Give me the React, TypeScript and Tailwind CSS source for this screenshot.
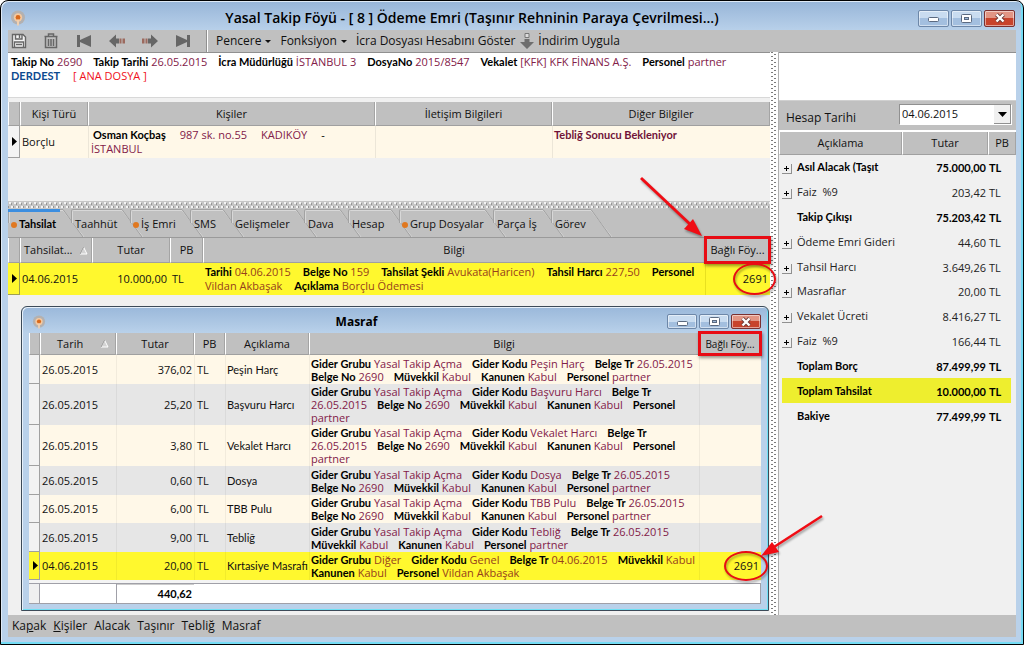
import React from 'react';
import clsx from 'clsx';

type Field = [label: string, value: string];

const BOLD = "font-['Lato','Open_Sans',sans-serif] font-bold text-black";

const menus = ['Pencere', 'Fonksiyon'];

const tabs: { name: string; width: number; dot?: boolean; active?: boolean; box: string }[] = [
  { name: 'Tahsilat', width: 63, dot: true, active: true, box: 'w-[63px]' },
  { name: 'Taahhüt', width: 59, box: 'w-[59px]' },
  { name: 'İş Emri', width: 60, dot: true, box: 'w-[60px]' },
  { name: 'SMS', width: 41, box: 'w-[41px]' },
  { name: 'Gelişmeler', width: 73, box: 'w-[73px]' },
  { name: 'Dava', width: 44, box: 'w-[44px]' },
  { name: 'Hesap', width: 51, box: 'w-[51px]' },
  { name: 'Grup Dosyalar', width: 94, dot: true, box: 'w-[94px]' },
  { name: 'Parça İş', width: 58, box: 'w-[58px]' },
  { name: 'Görev', width: 48, box: 'w-[48px]' },
];

const expenses: {
  date: string;
  amount: string;
  name: string;
  lines: Field[][];
  height: string;
  linked?: string;
}[] = [
  {
    date: '26.05.2015', amount: '376,02', name: 'Peşin Harç', height: 'h-[29px]',
    lines: [
      [['Gider Grubu', 'Yasal Takip Açma'], ['Gider Kodu', 'Peşin Harç'], ['Belge Tr', '26.05.2015']],
      [['Belge No', '2690'], ['Müvekkil', 'Kabul'], ['Kanunen', 'Kabul'], ['Personel', 'partner']],
    ],
  },
  {
    date: '26.05.2015', amount: '25,20', name: 'Başvuru Harcı', height: 'h-[41px]',
    lines: [
      [['Gider Grubu', 'Yasal Takip Açma'], ['Gider Kodu', 'Başvuru Harcı'], ['Belge Tr', '']],
      [['', '26.05.2015'], ['Belge No', '2690'], ['Müvekkil', 'Kabul'], ['Kanunen', 'Kabul'], ['Personel', '']],
      [['', 'partner']],
    ],
  },
  {
    date: '26.05.2015', amount: '3,80', name: 'Vekalet Harcı', height: 'h-[41px]',
    lines: [
      [['Gider Grubu', 'Yasal Takip Açma'], ['Gider Kodu', 'Vekalet Harcı'], ['Belge Tr', '']],
      [['', '26.05.2015'], ['Belge No', '2690'], ['Müvekkil', 'Kabul'], ['Kanunen', 'Kabul'], ['Personel', '']],
      [['', 'partner']],
    ],
  },
  {
    date: '26.05.2015', amount: '0,60', name: 'Dosya', height: 'h-[29px]',
    lines: [
      [['Gider Grubu', 'Yasal Takip Açma'], ['Gider Kodu', 'Dosya'], ['Belge Tr', '26.05.2015']],
      [['Belge No', '2690'], ['Müvekkil', 'Kabul'], ['Kanunen', 'Kabul'], ['Personel', 'partner']],
    ],
  },
  {
    date: '26.05.2015', amount: '6,00', name: 'TBB Pulu', height: 'h-[28px]',
    lines: [
      [['Gider Grubu', 'Yasal Takip Açma'], ['Gider Kodu', 'TBB Pulu'], ['Belge Tr', '26.05.2015']],
      [['Belge No', '2690'], ['Müvekkil', 'Kabul'], ['Kanunen', 'Kabul'], ['Personel', 'partner']],
    ],
  },
  {
    date: '26.05.2015', amount: '9,00', name: 'Tebliğ', height: 'h-[29px]',
    lines: [
      [['Gider Grubu', 'Yasal Takip Açma'], ['Gider Kodu', 'Tebliğ'], ['Belge Tr', '26.05.2015']],
      [['Müvekkil', 'Kabul'], ['Kanunen', 'Kabul'], ['Personel', 'partner']],
    ],
  },
  {
    date: '04.06.2015', amount: '20,00', name: 'Kırtasiye Masrafı', height: 'h-[28px]', linked: '2691',
    lines: [
      [['Gider Grubu', 'Diğer'], ['Gider Kodu', 'Genel'], ['Belge Tr', '04.06.2015'], ['Müvekkil', 'Kabul']],
      [['Kanunen', 'Kabul'], ['Personel', 'Vildan Akbaşak']],
    ],
  },
];

const balance: { name: string; amount: string; kind: 'item' | 'sum' | 'marked'; bold?: boolean }[] = [
  { name: 'Asıl Alacak (Taşıt', amount: '75.000,00', kind: 'item', bold: true },
  { name: 'Faiz  %9', amount: '203,42', kind: 'item' },
  { name: 'Takip Çıkışı', amount: '75.203,42', kind: 'sum', bold: true },
  { name: 'Ödeme Emri Gideri', amount: '44,60', kind: 'item' },
  { name: 'Tahsil Harcı', amount: '3.649,26', kind: 'item' },
  { name: 'Masraflar', amount: '20,00', kind: 'item' },
  { name: 'Vekalet Ücreti', amount: '8.416,27', kind: 'item' },
  { name: 'Faiz  %9', amount: '166,44', kind: 'item' },
  { name: 'Toplam Borç', amount: '87.499,99', kind: 'sum', bold: true },
  { name: 'Toplam Tahsilat', amount: '10.000,00', kind: 'marked', bold: true },
  { name: 'Bakiye', amount: '77.499,99', kind: 'sum', bold: true },
];

function Fields({ items, tone = 'text-[#822048]', gap = 'gap-3' }: { items: Field[]; tone?: string; gap?: string }) {
  return (
    <div className={clsx('flex whitespace-nowrap', gap)}>
      {items.map(([label, value], i) => (
        <span key={i}>
          {label && <b className={BOLD}>{label}</b>}
          {label && value && ' '}
          {value && <span className={tone}>{value}</span>}
        </span>
      ))}
    </div>
  );
}

function Th({ children, className }: { children?: React.ReactNode; className?: string }) {
  return (
    <th
      className={clsx(
        'relative border-r border-b border-l border-r-[#a4a4a4] border-b-[#a0a0a0] border-l-white bg-[#c0c0c0] text-center font-normal whitespace-nowrap text-[#111]',
        className,
      )}
    >
      {children}
    </th>
  );
}

function Marker() {
  return (
    <svg width="5" height="9" viewBox="0 0 5 9" className="ml-1 block" aria-hidden="true">
      <path d="M0 0L5 4.5L0 9Z" fill="#000" />
    </svg>
  );
}

function SortMark() {
  return (
    <svg width="9" height="9" viewBox="0 0 9 9" aria-hidden="true">
      <path d="M4.5 1L8 8H1Z" fill="#d4d4d4" stroke="#fff" />
      <path d="M4.5 1L1 8" stroke="#909090" />
    </svg>
  );
}

function AppMark({ size }: { size: number }) {
  return (
    <svg width={size} height={size} viewBox="0 0 16 16" aria-hidden="true">
      <circle cx="8" cy="7.5" r="7" fill="#b3b1b1" />
      <circle cx="8" cy="7.5" r="4.2" fill="#f4c9a0" />
      <circle cx="8" cy="7.5" r="2.4" fill="#d9691c" />
      <path d="M7 9.5h2v6H7z" fill="#f0d0b0" />
    </svg>
  );
}

function WindowButtons({ small }: { small?: boolean }) {
  const base = clsx(
    'flex items-center justify-center rounded-[2px] border shadow-[inset_0_0_0_1px_rgba(255,255,255,0.5)]',
    small ? 'h-[15px] w-[30px]' : 'h-[17px] w-[31px]',
  );
  const blue = 'border-[#6d87a8] bg-linear-to-b from-[#c9dcf0] from-50% to-[#a3bfdf] to-50%';
  return (
    <div className="flex gap-[2px]">
      <button type="button" aria-label="Simge durumuna küçült" className={clsx(base, blue)}>
        <svg width="11" height="10" viewBox="0 0 11 10">
          <rect x="0.5" y="4.5" width="10" height="4" rx="1" fill="#fff" stroke="#5b6a80" />
        </svg>
      </button>
      <button type="button" aria-label="Ekranı kapla" className={clsx(base, blue)}>
        <svg width="11" height="9" viewBox="0 0 11 9">
          <rect x="0.5" y="0.5" width="10" height="8" rx="1" fill="#fff" stroke="#5b6a80" />
          <rect x="3.5" y="3.5" width="4" height="2" fill="#9db8da" stroke="#5b6a80" />
        </svg>
      </button>
      <button
        type="button"
        aria-label="Kapat"
        className={clsx(base, 'border-[#7a3030] bg-linear-to-b from-[#e29584] from-45% to-[#c8432c] to-50%')}
      >
        <svg width="12" height="10" viewBox="0 0 12 10">
          <path d="M2.5 1.5L9.5 8.5M9.5 1.5L2.5 8.5" stroke="#6b3a38" strokeWidth="4" />
          <path d="M2.5 1.5L9.5 8.5M9.5 1.5L2.5 8.5" stroke="#fff" strokeWidth="2.4" />
        </svg>
      </button>
    </div>
  );
}

function ToolButton({ label, children }: { label: string; children: React.ReactNode }) {
  return (
    <button type="button" aria-label={label} className="flex w-[33px] justify-center">
      <svg width="16" height="16" viewBox="0 0 16 16" fill="#666" aria-hidden="true">
        {children}
      </svg>
    </button>
  );
}

function DotsVertical() {
  return (
    <div className="w-2 shrink-0 bg-white">
      <svg width="100%" height="100%" aria-hidden="true">
        <pattern id="dotsV" width="8" height="4" patternUnits="userSpaceOnUse">
          <rect x="1" y="0" width="2" height="1" fill="#7c7c7c" />
          <rect x="4" y="2" width="2" height="1" fill="#7c7c7c" />
        </pattern>
        <rect width="100%" height="100%" fill="url(#dotsV)" />
      </svg>
    </div>
  );
}

function DotsHorizontal() {
  return (
    <div className="h-2 bg-[#c6c6c6]">
      <svg width="100%" height="8" className="block" aria-hidden="true">
        <pattern id="dotsH" width="5" height="8" patternUnits="userSpaceOnUse">
          <rect x="1" y="1" width="2" height="2" fill="#f4f4f4" />
          <rect x="3" y="2" width="1" height="2" fill="#969696" />
          <rect x="3" y="5" width="2" height="2" fill="#f4f4f4" />
          <rect x="0" y="5" width="1" height="2" fill="#969696" />
        </pattern>
        <rect width="100%" height="100%" fill="url(#dotsH)" />
      </svg>
    </div>
  );
}

function RedBox() {
  return (
    <span className="pointer-events-none absolute -inset-[2px] z-20 border-3 border-[#e80c14] shadow-[1px_2px_3px_rgba(0,0,0,0.4)]" />
  );
}

function RedCircle({ className }: { className: string }) {
  return (
    <span
      className={clsx(
        'pointer-events-none absolute z-20 rounded-[50%] border-2 border-[#e80c14] drop-shadow-[1px_2px_1px_rgba(0,0,0,0.35)]',
        className,
      )}
    />
  );
}

function PersonTable() {
  return (
    <table className="w-full table-fixed border-separate border-spacing-0">
      <colgroup>
        <col className="w-3" />
        <col className="w-[68px]" />
        <col />
        <col className="w-[177px]" />
        <col className="w-[218px]" />
      </colgroup>
      <thead>
        <tr className="h-6">
          <Th />
          <Th>Kişi Türü</Th>
          <Th>Kişiler</Th>
          <Th>İletişim Bilgileri</Th>
          <Th>Diğer Bilgiler</Th>
        </tr>
      </thead>
      <tbody>
        <tr className="h-8 bg-[#fff8e8]">
          <td className="border-r border-b border-[#a0a0a0] bg-[#f4f4f4]"><Marker /></td>
          <td className="pl-[2px]">Borçlu</td>
          <td className="border-l border-[#ece6d8] pt-[2px] pl-[2px] align-top text-[#822048]">
            <div className="flex gap-[14px] pl-[2px] leading-[14px] whitespace-pre">
              <b className={BOLD}>Osman Koçbaş</b>
              <span>987 sk. no.55</span>
              <span>KADIKÖY</span>
              <span className="text-black">-</span>
            </div>
            <div className="leading-[14px]">İSTANBUL</div>
          </td>
          <td className="border-l border-[#ece6d8]" />
          <td className="border-l border-[#ece6d8] pt-[2px] pl-[1px] align-top">
            <b className="font-['Lato','Open_Sans',sans-serif] font-bold text-[#701238]">Tebliğ Sonucu Bekleniyor</b>
          </td>
        </tr>
      </tbody>
    </table>
  );
}

function Tabs() {
  return (
    <div role="tablist" className="flex h-[29px] border-b border-[#9a9a9a] bg-[#c0c0c0]">
      {tabs.map((t) => (
        <button
          key={t.name}
          type="button"
          role="tab"
          aria-selected={!!t.active}
          className={clsx('relative flex items-center gap-[2px] whitespace-nowrap', t.box, t.dot ? 'pl-[3px]' : 'pl-1')}
        >
          <svg className="absolute top-0 left-0 overflow-visible" width={t.width} height="28" fill="none" aria-hidden="true">
            <path
              d={`M1.5 14V2.5Q1.5 1.5 2.5 1.5H${t.width - 8}L${t.width + 13} 28`}
              stroke="#d8d8d8"
            />
            <path d={`M0.5 14V1.5Q0.5 0.5 1.5 0.5H${t.width - 8}L${t.width + 12} 28`} stroke="#a2a2a2" />
            {t.active && <rect x="0" y="0" width={t.width - 11} height="3" fill="#3c8ee0" />}
          </svg>
          {t.dot && <span className="relative mt-[3px] size-[6px] rounded-full bg-[#e07820]" />}
          <span className={clsx('relative mt-[2px]', t.active && BOLD)}>{t.name}</span>
        </button>
      ))}
    </div>
  );
}

function PaymentTable() {
  return (
    <table className="w-full table-fixed border-separate border-spacing-0">
      <colgroup>
        <col className="w-3" />
        <col className="w-[72px]" />
        <col className="w-[78px]" />
        <col className="w-[33px]" />
        <col />
        <col className="w-[65px]" />
      </colgroup>
      <thead>
        <tr className="h-[25px]">
          <Th />
          <Th>
            <span className="flex items-center justify-between px-[3px]">Tahsilat...<SortMark /></span>
          </Th>
          <Th>Tutar</Th>
          <Th>PB</Th>
          <Th>Bilgi</Th>
          <Th>
            Bağlı Föy...
            <RedBox />
            <svg className="pointer-events-none absolute -top-[61px] -left-[67px] z-20 overflow-visible drop-shadow-[1px_2px_1px_rgba(0,0,0,0.35)]" width="64" height="60" aria-hidden="true">
              <path d="M2 1L53 49" stroke="#f00c14" strokeWidth="3" />
              <path d="M63 59L45 52L54 42Z" fill="#f00c14" />
            </svg>
          </Th>
        </tr>
      </thead>
      <tbody>
        <tr className="h-8 bg-[#fff82e]">
          <td className="border-r border-b border-[#a0a050]"><Marker /></td>
          <td className="pl-[2px]">04.06.2015</td>
          <td className="pr-[3px] text-right">10.000,00</td>
          <td className="pl-[2px]">TL</td>
          <td className="pl-[2px] leading-[14px]">
            <Fields
              tone="text-[#96401c]"
              items={[['Tarihi', '04.06.2015'], ['Belge No', '159'], ['Tahsilat Şekli', 'Avukata(Haricen)'], ['Tahsil Harcı', '227,50'], ['Personel', '']]}
            />
            <Fields tone="text-[#96401c]" items={[['', 'Vildan Akbaşak'], ['Açıklama', 'Borçlu Ödemesi']]} />
          </td>
          <td className="relative border-l border-[#e8e020] pr-[2px] text-right">
            2691
            <RedCircle className="top-0 -right-[6px] h-[32px] w-[43px]" />
          </td>
        </tr>
      </tbody>
    </table>
  );
}

function ExpenseWindow() {
  return (
    <section className="relative z-10 mt-[11px] mr-[1px] mb-[3px] ml-[13px] rounded-t-[6px] border border-[#3c4a58] bg-linear-to-b from-[#9ab8da] to-[#b9d1ea] to-[26px] px-[7px] pb-[6px] shadow-[inset_1px_1px_0_#e6f0fa,inset_-1px_-1px_0_#6fe0f4]">
      <header className="flex h-[26px] items-center pt-[3px] pl-[3px]">
        <AppMark size={14} />
        <h2 className="flex-1 text-center font-['Open_Sans',sans-serif] text-xs font-bold text-black">Masraf</h2>
        <WindowButtons small />
      </header>
      <table className="w-full table-fixed border-separate border-spacing-0">
        <colgroup>
          <col className="w-[11px]" />
          <col className="w-[76px]" />
          <col className="w-[78px]" />
          <col className="w-[31px]" />
          <col className="w-[84px]" />
          <col />
          <col className="w-[62px]" />
        </colgroup>
        <thead>
          <tr className="h-[22px]">
            <Th />
            <Th>
              <span className="flex items-center justify-between pr-[6px] pl-4">Tarih<SortMark /></span>
            </Th>
            <Th>Tutar</Th>
            <Th>PB</Th>
            <Th>Açıklama</Th>
            <Th>Bilgi</Th>
            <Th className="text-[10px]">
              Bağlı Föy...
              <RedBox />
            </Th>
          </tr>
        </thead>
        <tbody>
          {expenses.map((row, i) => (
            <tr
              key={i}
              className={clsx(row.height, row.linked ? 'bg-[#fff82e]' : i % 2 ? 'bg-[#e6e6e6]' : 'bg-[#fff8e8]')}
            >
              <td className={clsx('border-r border-b border-[#a0a0a0]', !row.linked && 'bg-[#f2f2f2]')}>
                {row.linked && <Marker />}
              </td>
              <td className="pl-[2px]">{row.date}</td>
              <td className="border-l border-black/5 pr-[2px] text-right">{row.amount}</td>
              <td className="border-l border-black/5 pl-[2px]">TL</td>
              <td className="border-l border-black/5 pl-[1px] font-['Lato','Open_Sans',sans-serif] whitespace-nowrap">{row.name}</td>
              <td className="border-l border-black/5 pl-[1px] leading-[13px]">
                {row.lines.map((line, j) => (
                  <Fields key={j} gap="gap-[10px]" items={line} tone={row.linked ? 'text-[#96401c]' : undefined} />
                ))}
              </td>
              <td className="relative border-l border-black/5 pr-[2px] text-right">
                {row.linked && (
                  <>
                    {row.linked}
                    <RedCircle className="-top-[1px] -right-[7px] h-[30px] w-[44px]" />
                    <svg className="pointer-events-none absolute -top-[37px] -right-[62px] z-20 overflow-visible drop-shadow-[1px_2px_1px_rgba(0,0,0,0.35)]" width="62" height="42" aria-hidden="true">
                      <path d="M61 1L13 32" stroke="#f00c14" strokeWidth="2.5" />
                      <path d="M0 41L11 27L18 37Z" fill="#f00c14" />
                    </svg>
                  </>
                )}
              </td>
            </tr>
          ))}
        </tbody>
        <tfoot>
          <tr className="h-[3px] bg-[#f4f4f4]">
            <td colSpan={7} />
          </tr>
          <tr className="h-[21px] bg-white">
            <td className="border-t border-r border-b border-[#a0a0a8] bg-[#f0f0f0]" />
            <td className="border-t border-b border-[#a0a0a8]" />
            <td className={clsx('border-t border-b border-l border-[#a0a0a8] pr-[2px] text-right shadow-[inset_0_1px_0_#ccc]', BOLD)}>440,62</td>
            <td colSpan={4} className="border-t border-r border-b border-[#a0a0a8]" />
          </tr>
        </tfoot>
      </table>
    </section>
  );
}

function BalancePanel() {
  return (
    <aside className="flex w-[238px] shrink-0 flex-col border-l border-[#b0b0b0] bg-[#f0f0f0]">
      <div className="h-[49px] border-t border-b border-t-[#909090] border-b-[#d0d0d0] bg-white" />
      <div className="flex h-[29px] items-center justify-between bg-[#c0c0c0] pt-[2px] pr-1 pl-[7px]">
        <label htmlFor="balance-date" className="pt-[2px] text-xs">Hesap Tarihi</label>
        <div className="relative -mt-1 h-[21px] w-[113px] border border-[#909090] border-r-white border-b-white bg-white">
          <select id="balance-date" className="block h-[17px] w-full appearance-none bg-transparent pl-[2px] text-[11px] outline-none">
            <option>04.06.2015</option>
          </select>
          <span className="pointer-events-none absolute top-0 right-0 flex h-full w-[17px] items-center justify-center border-r border-b border-[#909090] bg-[#f0f0f0]">
            <svg width="9" height="5" viewBox="0 0 9 5" aria-hidden="true"><path d="M0 0H9L4.5 5Z" fill="#000" /></svg>
          </span>
        </div>
      </div>
      <div className="border-t-2 border-white">
        <table className="w-full table-fixed border-separate border-spacing-0">
          <colgroup>
            <col />
            <col className="w-[86px]" />
            <col className="w-[28px]" />
          </colgroup>
          <thead>
            <tr className="h-[23px]">
              <Th>Açıklama</Th>
              <Th>Tutar</Th>
              <Th>PB</Th>
            </tr>
          </thead>
        </table>
      </div>
      <div className="pr-[5px] pl-[3px]">
        <table className="h-[273px] w-full table-fixed border-separate border-spacing-0">
          <colgroup>
            <col className="w-[15px]" />
            <col />
            <col className="w-[71px]" />
            <col className="w-[25px]" />
          </colgroup>
          <tbody>
            {balance.map((row, i) => (
              <tr key={i} className={clsx(row.kind === 'marked' && 'bg-[#eeee2e]', row.bold ? BOLD : 'text-[#222]')}>
                <td>
                  {row.kind === 'item' && (
                    <button
                      type="button"
                      aria-label={`${row.name} aç`}
                      className="mt-1 flex size-[10px] items-center justify-center border-r border-b border-[#909090]"
                    >
                      <svg width="5" height="5" viewBox="0 0 5 5"><path d="M2 0h1v5h-1zM0 2h5v1h-5z" fill="#000" /></svg>
                    </button>
                  )}
                </td>
                <td className="whitespace-pre">{row.name}</td>
                <td className="pt-[2px] text-right">{row.amount}</td>
                <td className="pt-[2px] pl-[3px]">TL</td>
              </tr>
            ))}
          </tbody>
        </table>
      </div>
    </aside>
  );
}

export default function App() {
  return (
    <div className="flex min-h-screen flex-col rounded-t-lg border border-black bg-linear-to-b from-[#97b5d8] to-[#b9d1ea] to-[30px] px-[7px] pb-[7px] font-['Open_Sans','Noto_Sans',sans-serif] text-[11px] leading-[14px] text-[#111] shadow-[inset_-2px_-2px_0_#74dcf4,inset_1px_1px_0_#dfeaf6]">
      <header className="flex h-[29px] shrink-0 items-center pt-[5px] pr-[1px] pl-[2px]">
        <AppMark size={16} />
        <h1 className="flex-1 text-center text-sm leading-5 font-semibold text-black">
          Yasal Takip Föyü - [ 8 ] Ödeme Emri (Taşınır Rehninin Paraya Çevrilmesi...)
        </h1>
        <WindowButtons />
      </header>

      <nav className="flex h-[22px] shrink-0 items-center bg-[#c0c0c0] text-xs">
        <div className="flex">
          <button type="button" aria-label="Kaydet" className="flex w-[26px] pl-[3px]">
            <svg width="16" height="16" viewBox="0 0 16 16" fill="none" stroke="#666" strokeWidth="1.4" aria-hidden="true">
              <path d="M1.5 1.5H12L14.5 4V14.5H1.5Z" fill="#f2f2f2" />
              <path d="M4.5 1.5V6H11V1.5M8.5 2V5M3.5 14V9H12.5V14M5 11.5H11" />
            </svg>
          </button>
          <ToolButton label="Sil">
            <path d="M2.500 4V14.500H13.500V4M5.500 6V13M8 6V13M10.500 6V13M1.500 3.500H14.500M5.500 3V1H10.500V3" fill="none" stroke="#666" strokeWidth="1.500" />
          </ToolButton>
          <ToolButton label="İlk kayıt">
            <path d="M1 2H4V7L15 2V14L4 9V14H1Z" />
          </ToolButton>
          <ToolButton label="Önceki kayıt">
            <path d="M0 8L7 1.500V5.500H10V10.500H7V14.500Z" />
            <path d="M10.500 5.500h2v5h-2zM13.500 5.500h2.500v5h-2.500z" fill="#9c6a5e" />
          </ToolButton>
          <ToolButton label="Sonraki kayıt">
            <path d="M16 8L9 1.500V5.500H6V10.500H9V14.500Z" />
            <path d="M3.500 5.500h2v5h-2zM0 5.500h2.500v5h-2.500z" fill="#9c6a5e" />
          </ToolButton>
          <ToolButton label="Son kayıt">
            <path d="M15 2H12V7L1 2V14L12 9V14H15Z" />
          </ToolButton>
        </div>
        <span className="ml-[7px] h-full w-[2px] border-l border-[#909090] bg-white" />
        <div className="flex items-center gap-[9px] pl-[8px] whitespace-nowrap">
          {menus.map((m) => (
            <button key={m} type="button" className="flex items-center gap-1">
              {m}
              <svg width="6" height="3" viewBox="0 0 6 3" aria-hidden="true"><path d="M0 0H6L3 3Z" fill="#111" /></svg>
            </button>
          ))}
          <button type="button">İcra Dosyası Hesabını Göster</button>
          <button type="button" className="-ml-1 flex items-center gap-1">
            <svg width="14" height="16" viewBox="0 0 14 16" className="shrink-0" aria-hidden="true">
              <path d="M5 0.500H9V4.500H5Z" fill="#ddd" stroke="#777" />
              <path d="M4.500 6H9.500V9H14L7 16L0 9H4.500Z" fill="#6e6e6e" />
            </svg>
            İndirim Uygula
          </button>
        </div>
      </nav>

      <main className="flex flex-1">
        <div className="min-w-0 flex-1 bg-[#f0f0f0]">
          <div className="mb-1 h-[46px] border-t border-b border-t-[#909090] border-b-[#d8d8d8] bg-white pt-[2px] pl-[3px]">
            <Fields
              gap="gap-[11px]"
              items={[
                ['Takip No', '2690'],
                ['Takip Tarihi', '26.05.2015'],
                ['İcra Müdürlüğü', 'İSTANBUL 3'],
                ['DosyaNo', '2015/8547'],
                ['Vekalet', '[KFK] KFK FİNANS A.Ş.'],
                ['Personel', 'partner'],
              ]}
            />
            <div className="flex gap-[13px]">
              <span className="font-['Lato','Open_Sans',sans-serif] font-bold text-[#0c4a90]">DERDEST</span>
              <span className="text-[#f01020]">[ ANA DOSYA ]</span>
            </div>
          </div>
          <PersonTable />
          <div className="h-[43px]" />
          <DotsHorizontal />
          <Tabs />
          <PaymentTable />
          <ExpenseWindow />
        </div>
        <DotsVertical />
        <BalancePanel />
      </main>

      <footer className="flex h-[22px] shrink-0 items-center gap-[7px] bg-[#c0c0c0] pl-1 text-xs">
        <a href="#kapak">Ka<u>p</u>ak</a>
        <a href="#kisiler"><u>K</u>işiler</a>
        <a href="#alacak">Alacak</a>
        <a href="#tasinir">Taşınır</a>
        <a href="#teblig">Tebliğ</a>
        <a href="#masraf">Masraf</a>
      </footer>
    </div>
  );
}
